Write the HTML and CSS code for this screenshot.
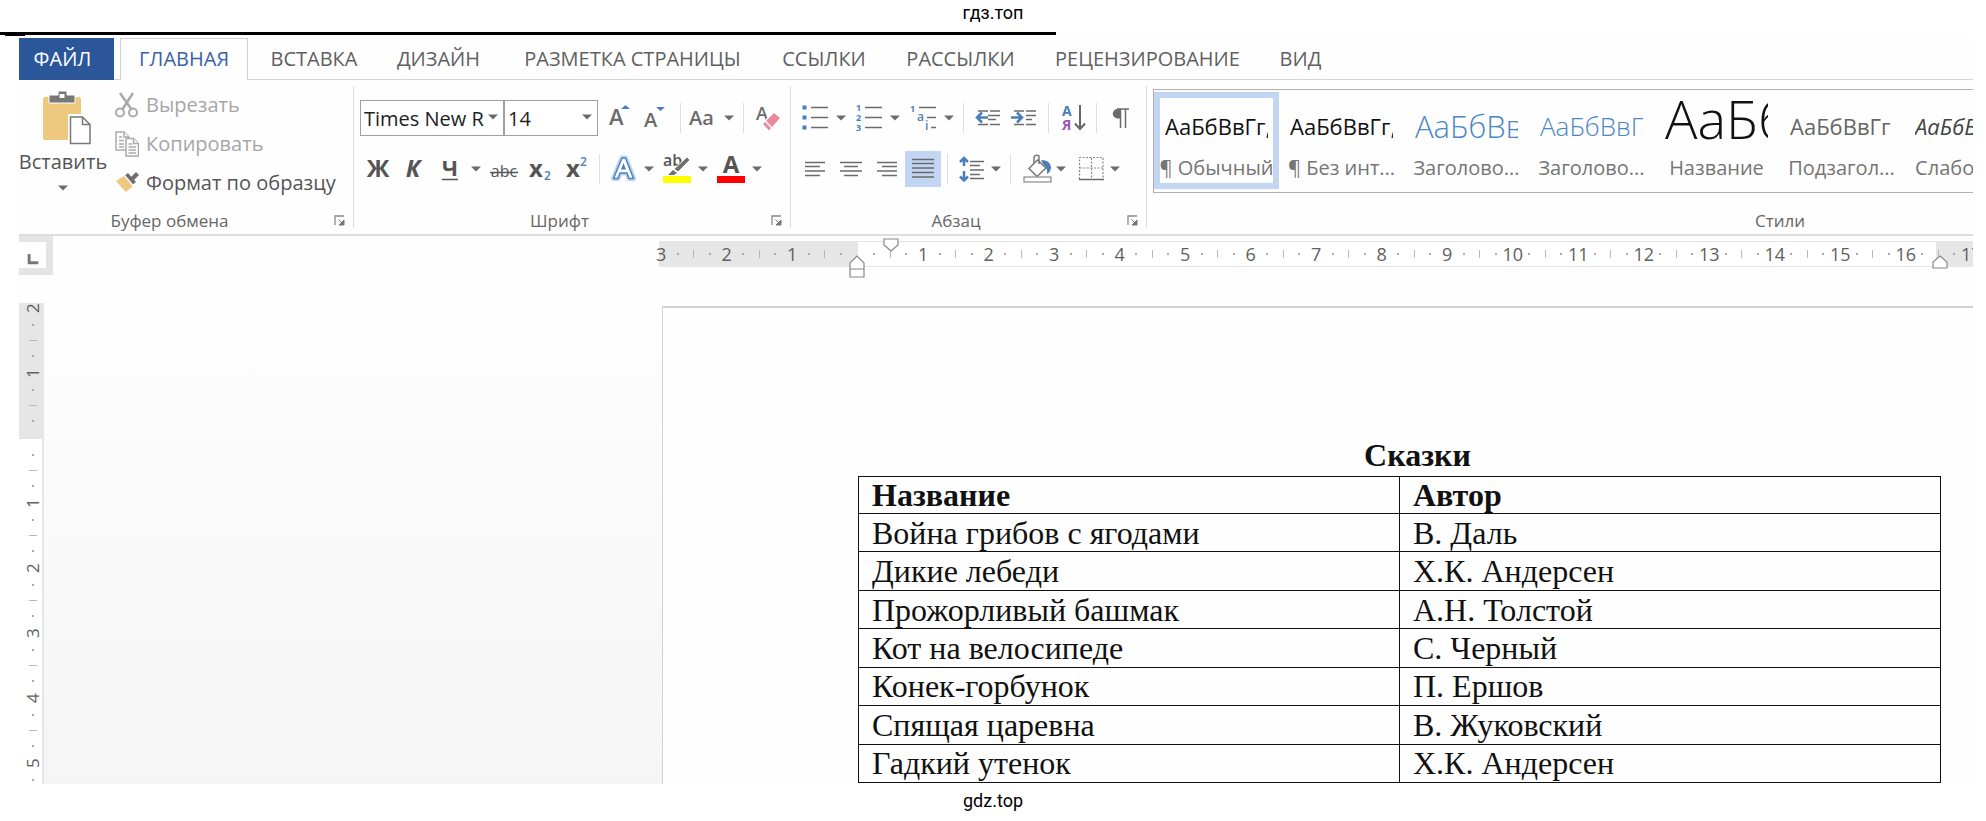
FILE: index.html
```html
<!DOCTYPE html>
<html lang="ru">
<head>
<meta charset="utf-8">
<title>гдз.топ</title>
<link rel="stylesheet" href="styles.css">
</head>
<body>
<svg class="defs" aria-hidden="true">
  <symbol id="caret" viewBox="0 0 10 6"><path d="M0 0.500H10L5 5.500z" fill="#6b6b6b"/></symbol>
  <symbol id="launch" viewBox="0 0 12 12"><path d="M1 10V1H10" fill="none" stroke="#888" stroke-width="1.300"/><path d="M4.500 4.500L9 9M10 5V10H5z" fill="#777" stroke="#777" stroke-width="1"/></symbol>
</svg>

<header class="site-name">гдз.топ</header>
<div class="top-rule"></div>

<main class="app">
  <nav class="tabs">
    <a class="tab tab-file" href="#file">ФАЙЛ</a>
    <a class="tab tab-active" href="#home">ГЛАВНАЯ</a>
    <a class="tab" href="#insert">ВСТАВКА</a>
    <a class="tab" href="#design">ДИЗАЙН</a>
    <a class="tab" href="#layout">РАЗМЕТКА СТРАНИЦЫ</a>
    <a class="tab" href="#refs">ССЫЛКИ</a>
    <a class="tab" href="#mail">РАССЫЛКИ</a>
    <a class="tab" href="#review">РЕЦЕНЗИРОВАНИЕ</a>
    <a class="tab" href="#view">ВИД</a>
  </nav>

  <div class="ribbon">
    <section class="group group-clipboard">
      <div class="clipboard">
        <button class="paste" type="button">
          <svg width="56" height="54" viewBox="-8 0 56 54"><rect x="0" y="6" width="38" height="43" rx="2" fill="#edc87e"/><path d="M6 4h9V0h9v4h8v8H6z" fill="#777" stroke="#fff" stroke-width="1"/><rect x="16.500" y="3" width="5" height="4" fill="#fff"/><path d="M25 23H40L48 31V54H25z" fill="#fff"/><path d="M27.500 26H39.500L47 33.500V52.500H27.500z" fill="#fff" stroke="#777" stroke-width="1.500"/><path d="M39.500 26V33.500H47" fill="none" stroke="#777" stroke-width="1.500"/></svg>
          <span>Вставить</span>
          <svg class="caret"><use href="#caret"/></svg>
        </button>
        <div class="clip-list">
          <button class="clip-item is-disabled" type="button">
            <svg width="24" height="26" viewBox="0 0 24 26"><path d="M5 1L17 18M18 1L7 18" stroke="#aaa" stroke-width="2.500" fill="none"/><circle cx="5" cy="20.500" r="4" fill="none" stroke="#aaa" stroke-width="2"/><circle cx="18" cy="20.500" r="4" fill="none" stroke="#aaa" stroke-width="2"/></svg>
            <span>Вырезать</span>
          </button>
          <button class="clip-item is-disabled" type="button">
            <svg width="24" height="26" viewBox="0 0 24 26" fill="#fff" stroke="#aaa" stroke-width="1.500"><path d="M1 1H9L14 6V19H1z"/><path d="M9 1V6H14M4 6H7M4 9.500H9M4 13H9M4 16H9"/><path d="M11 7.500H18.500L23.500 12.500V25H11z"/><path d="M18.500 7.500V12.500H23.500M13.500 13H17M13.500 16H21M13.500 19H21M13.500 22H21"/></svg>
            <span>Копировать</span>
          </button>
          <button class="clip-item" type="button">
            <svg width="24" height="26" viewBox="0 0 24 26"><path d="M1 11L9 6L18 16L11 22Q7 18 1 11z" fill="#edc87e"/><path d="M9 6L13 3L21 12L17 15z" fill="#6f6f6f"/><path d="M15 8L21 2L24 5L18 11z" fill="#6f6f6f"/><path d="M9.500 5.500L18 15.500" stroke="#fff" stroke-width="1.500"/></svg>
            <span>Формат по образцу</span>
          </button>
        </div>
      </div>
      <footer class="group-foot"><span>Буфер обмена</span><button class="launcher" type="button" aria-label="Параметры буфера обмена"><svg><use href="#launch"/></svg></button></footer>
    </section>

    <section class="group group-font">
      <div class="rows">
        <div class="row">
          <div class="combo combo-font">
            <select aria-label="Шрифт"><option>Times New R</option></select>
            <svg class="caret"><use href="#caret"/></svg>
          </div>
          <div class="combo combo-size">
            <select aria-label="Размер шрифта"><option>14</option></select>
            <svg class="caret"><use href="#caret"/></svg>
          </div>
          <span class="space"></span>
          <button class="tool" type="button" aria-label="Увеличить размер"><svg viewBox="0 0 36 36"><text class="g semi s22" x="7" y="25">A</text><path d="M19 9L23.500 5L28 9z" fill="#4a7ebb"/></svg></button>
          <button class="tool" type="button" aria-label="Уменьшить размер"><svg viewBox="0 0 36 36"><text class="g semi s20" x="6" y="27">A</text><path d="M18 7H27L22.500 11z" fill="#4a7ebb"/></svg></button>
          <span class="sep"></span>
          <button class="tool" type="button" aria-label="Регистр"><svg viewBox="0 0 36 36"><text class="g semi s20" x="2" y="25">Aa</text></svg></button>
          <button class="drop drop-near" type="button" aria-label="Регистр, меню"><svg class="caret"><use href="#caret"/></svg></button>
          <span class="sep"></span>
          <button class="tool" type="button" aria-label="Очистить формат"><svg viewBox="0 0 36 36"><text class="g semi s18" x="6" y="20">A</text><path d="M12.500 23L22 12.500L30 19L20.500 29.500z" fill="#fff"/><path d="M16 21L24 13L30 18L22 27z" fill="#e8899d"/><path d="M13 24L15 22L21 28L19 30.500z" fill="#e8899d"/></svg></button>
        </div>
        <div class="row">
          <button class="tool" type="button" aria-label="Полужирный"><svg viewBox="0 0 36 36"><text class="d bold s24 mid" x="18" y="26">Ж</text></svg></button>
          <button class="tool" type="button" aria-label="Курсив"><svg viewBox="0 0 36 36"><text class="d bold ital s24 mid" x="17" y="26">К</text></svg></button>
          <button class="tool" type="button" aria-label="Подчёркнутый"><svg viewBox="0 0 36 36"><text class="d bold s22 mid" x="18" y="25">Ч</text><path d="M10 28.500H26" stroke="#555" stroke-width="1.500"/></svg></button>
          <button class="drop" type="button" aria-label="Подчёркивание, меню"><svg class="caret"><use href="#caret"/></svg></button>
          <span class="gap"></span>
          <button class="tool" type="button" aria-label="Зачёркнутый"><svg viewBox="0 0 36 36"><text class="d s16 mid" x="18" y="26">abc</text><path d="M4 21.500H32" stroke="#555" stroke-width="1.500"/></svg></button>
          <button class="tool" type="button" aria-label="Подстрочный"><svg viewBox="0 0 36 36"><text class="d bold s24" x="7" y="26">x</text><text class="b semi s12" x="22" y="29">2</text></svg></button>
          <button class="tool" type="button" aria-label="Надстрочный"><svg viewBox="0 0 36 36"><text class="d bold s24" x="8" y="26">x</text><text class="b semi s12" x="22" y="15">2</text></svg></button>
          <span class="sep sep-tight"></span>
          <button class="tool" type="button" aria-label="Текстовые эффекты"><svg viewBox="0 0 36 36"><path d="M8.500 27.500L17 7H20.500L28.500 27.500H24L22 22H15L13 27.500z" fill="#fff" stroke="#bcd3f0" stroke-width="5" stroke-linejoin="round"/><path d="M8.500 27.500L17 7H20.500L28.500 27.500H24L22 22H15L13 27.500z" fill="#fff" stroke="#4a80c4" stroke-width="1.500" stroke-linejoin="round"/><path d="M16 18.500L18.500 12L21 18.500z" fill="#4a80c4"/></svg></button>
          <button class="drop" type="button" aria-label="Текстовые эффекты, меню"><svg class="caret"><use href="#caret"/></svg></button>
          <span class="gap"></span>
          <button class="tool" type="button" aria-label="Цвет выделения"><svg viewBox="0 0 36 36"><text class="d semi s16" x="4" y="15">ab</text><path d="M28 6L31 9L19 21L15 18z" fill="#707070" stroke="#fff" stroke-width="1"/><path d="M14 19L18 22L15 24H9z" fill="#707070"/><rect x="4" y="25" width="28" height="7" fill="#ff0"/></svg></button>
          <button class="drop" type="button" aria-label="Цвет выделения, меню"><svg class="caret"><use href="#caret"/></svg></button>
          <span class="gap"></span>
          <button class="tool" type="button" aria-label="Цвет текста"><svg viewBox="0 0 36 36"><text class="d bold s24 mid" x="18" y="22">A</text><rect x="4" y="25" width="28" height="7" fill="#f00"/></svg></button>
          <button class="drop" type="button" aria-label="Цвет текста, меню"><svg class="caret"><use href="#caret"/></svg></button>
        </div>
      </div>
      <footer class="group-foot"><span>Шрифт</span><button class="launcher" type="button" aria-label="Параметры шрифта"><svg><use href="#launch"/></svg></button></footer>
    </section>

    <section class="group group-para">
      <div class="rows">
        <div class="row">
          <button class="tool" type="button" aria-label="Маркеры"><svg viewBox="0 0 36 36"><path d="M14 7.500H31M14 17.500H31M14 27.500H31" class="ln"/><path d="M5.500 5.500h4v4h-4zM5.500 15.500h4v4h-4zM5.500 25.500h4v4h-4z" fill="#4a7ebb"/></svg></button>
          <button class="drop" type="button" aria-label="Маркеры, меню"><svg class="caret"><use href="#caret"/></svg></button>
          <span class="gap"></span>
          <button class="tool" type="button" aria-label="Нумерация"><svg viewBox="0 0 36 36"><path d="M14 7.500H31M14 17.500H31M14 27.500H31" class="ln"/><text class="b bold s9" x="5" y="11">1</text><text class="b bold s9" x="5" y="21">2</text><text class="b bold s9" x="5" y="31">3</text></svg></button>
          <button class="drop" type="button" aria-label="Нумерация, меню"><svg class="caret"><use href="#caret"/></svg></button>
          <span class="gap"></span>
          <button class="tool" type="button" aria-label="Многоуровневый список"><svg viewBox="0 0 36 36"><path d="M14 7.500H31M22 17.500H31M26 27.500H31" class="ln"/><text class="b bold s9" x="5" y="12">1</text><text class="b semi s12" x="12" y="21">a</text><text class="b semi s12" x="20" y="30">i</text></svg></button>
          <button class="drop" type="button" aria-label="Многоуровневый список, меню"><svg class="caret"><use href="#caret"/></svg></button>
          <span class="sep"></span>
          <button class="tool" type="button" aria-label="Уменьшить отступ"><svg viewBox="0 0 36 36"><path d="M8 11H18M20 11H30M18 15.500H30M18 19.500H26M8 24.500H18M20 24.500H30" class="ln"/><path d="M18 17.500H8M12 12.500L7 17.500L12 22.500" fill="none" stroke="#4a7ebb" stroke-width="2.500"/></svg></button>
          <button class="tool" type="button" aria-label="Увеличить отступ"><svg viewBox="0 0 36 36"><path d="M8 11H18M20 11H30M20 15.500H30M20 19.500H26M8 24.500H18M20 24.500H30" class="ln"/><path d="M5 17.500H15M11 12.500L16 17.500L11 22.500" fill="none" stroke="#4a7ebb" stroke-width="2.500"/></svg></button>
          <span class="sep"></span>
          <button class="tool" type="button" aria-label="Сортировка"><svg viewBox="0 0 36 36"><text class="b bold s14" x="7" y="16">А</text><text class="p bold s14" x="7" y="30">Я</text><path d="M25 5V28M20 23.500L25 29L30 23.500" fill="none" stroke="#666" stroke-width="2"/></svg></button>
          <span class="sep sep-tight"></span>
          <button class="tool" type="button" aria-label="Непечатаемые знаки"><svg viewBox="0 0 36 36"><path d="M18 9H15.500A4.500 4.500 0 0 0 15.500 18.500H18z" fill="#6b6b6b"/><path d="M15 9H27M18.500 9V28M23.500 9V28" fill="none" stroke="#6b6b6b" stroke-width="1.500"/></svg></button>
        </div>
        <div class="row">
          <button class="tool" type="button" aria-label="По левому краю"><svg viewBox="0 0 36 36"><path d="M8 11.500H28M8 15.500H23M8 20H28M8 24.500H23" class="ln"/></svg></button>
          <button class="tool" type="button" aria-label="По центру"><svg viewBox="0 0 36 36"><path d="M7 11.500H29M11 15.500H25M7 20H29M11 24.500H25" class="ln"/></svg></button>
          <button class="tool" type="button" aria-label="По правому краю"><svg viewBox="0 0 36 36"><path d="M8 11.500H28M13 15.500H28M8 20H28M13 24.500H28" class="ln"/></svg></button>
          <button class="tool is-on" type="button" aria-label="По ширине" aria-pressed="true"><svg viewBox="0 0 36 36"><path d="M7 8.500H29M7 12.500H29M7 17H29M7 21.500H29M7 26H29" class="ln"/></svg></button>
          <span class="sep"></span>
          <button class="tool" type="button" aria-label="Интервал"><svg viewBox="0 0 36 36"><path d="M16 10.500H30M16 14.500H26M16 19H30M16 23.500H26M16 27.500H30" class="ln"/><path d="M10 7V15M6 11L10 7L14 11M10 20V29M6 25.500L10 29.500L14 25.500" fill="none" stroke="#4a7ebb" stroke-width="2.500"/></svg></button>
          <button class="drop drop-near" type="button" aria-label="Интервал, меню"><svg class="caret"><use href="#caret"/></svg></button>
          <span class="sep"></span>
          <button class="tool" type="button" aria-label="Заливка"><svg viewBox="0 0 36 36"><path d="M24 9Q33 9 34 16Q34 21 30 23Q31 17 26 13z" fill="#4a7ebb"/><path d="M12 17.500L20.500 9L29 17L20 25.500z" fill="#fff" stroke="#777" stroke-width="1.500"/><path d="M17 12V6Q19 3 22 5V13" fill="none" stroke="#777" stroke-width="1.500"/><rect x="7" y="26" width="27" height="5" fill="#fff" stroke="#888" stroke-width="1.200"/></svg></button>
          <button class="drop" type="button" aria-label="Заливка, меню"><svg class="caret"><use href="#caret"/></svg></button>
          <span class="gap"></span>
          <button class="tool" type="button" aria-label="Границы"><svg viewBox="0 0 36 36"><path d="M8.500 28V6.500H32V28M20.500 7V28M9 17H32" fill="none" stroke="#888" stroke-width="1.200" stroke-dasharray="2 1.500"/><path d="M8 28.500H33" class="ln"/></svg></button>
          <button class="drop" type="button" aria-label="Границы, меню"><svg class="caret"><use href="#caret"/></svg></button>
        </div>
      </div>
      <footer class="group-foot"><span>Абзац</span><button class="launcher" type="button" aria-label="Параметры абзаца"><svg><use href="#launch"/></svg></button></footer>
    </section>

    <section class="group group-styles">
      <div class="gallery">
        <button class="style is-current" type="button"><span class="sample">АаБбВвГг,</span><span class="name">¶ Обычный</span></button>
        <button class="style" type="button"><span class="sample">АаБбВвГг,</span><span class="name">¶ Без инт...</span></button>
        <button class="style" type="button"><span class="sample sample-h1">АаБбВв</span><span class="name">Заголово...</span></button>
        <button class="style" type="button"><span class="sample sample-h2">АаБбВвГ</span><span class="name">Заголово...</span></button>
        <button class="style" type="button"><span class="sample sample-title">АаБб</span><span class="name">Название</span></button>
        <button class="style" type="button"><span class="sample sample-sub">АаБбВвГг</span><span class="name">Подзагол...</span></button>
        <button class="style" type="button"><span class="sample sample-em">АаБбВвГг</span><span class="name">Слабое в...</span></button>
      </div>
      <footer class="group-foot"><span>Стили</span></footer>
    </section>
  </div>

  <div class="ruler-row">
    <button class="tab-stop" type="button" aria-label="Позиция табуляции"><svg viewBox="0 0 28 26"><path d="M10.500 12V21H20" fill="none" stroke="#777" stroke-width="3"/></svg></button>
    <div class="ruler">
      <div class="band"></div>
      <div class="scale">
        <span class="cm">3</span><span class="cm">2</span><span class="cm">1</span><span class="cm"></span>
        <span class="cm">1</span><span class="cm">2</span><span class="cm">3</span><span class="cm">4</span>
        <span class="cm">5</span><span class="cm">6</span><span class="cm">7</span><span class="cm">8</span>
        <span class="cm">9</span><span class="cm">10</span><span class="cm">11</span><span class="cm">12</span>
        <span class="cm">13</span><span class="cm">14</span><span class="cm">15</span><span class="cm">16</span><span class="cm">17</span>
      </div>
      <svg class="marker marker-left" viewBox="0 0 16 23"><path d="M1 22V8L8 1L15 8V22zM1 14H15" fill="#fff" stroke="#888" stroke-width="1.200"/></svg>
      <svg class="marker marker-first" viewBox="0 0 16 14"><path d="M1 1H15V7L8 13L1 7z" fill="#fff" stroke="#888" stroke-width="1.200"/></svg>
      <svg class="marker marker-right" viewBox="0 0 16 14"><path d="M1 13V7L8 1L15 7V13z" fill="#fff" stroke="#888" stroke-width="1.200"/></svg>
    </div>
  </div>

  <div class="workspace">
    <div class="vruler">
      <div class="vscale">
        <span class="vcm"><b>2</b></span><span class="vcm"><b>1</b></span><span class="vcm"></span><span class="vcm"><b>1</b></span>
        <span class="vcm"><b>2</b></span><span class="vcm"><b>3</b></span><span class="vcm"><b>4</b></span><span class="vcm"><b>5</b></span>
      </div>
    </div>
    <div class="gutter"></div>
    <article class="page">
      <h1>Сказки</h1>
      <table>
        <thead><tr><th scope="col">Название</th><th scope="col">Автор</th></tr></thead>
        <tbody>
          <tr><td>Война грибов с ягодами</td><td>В. Даль</td></tr>
          <tr><td>Дикие лебеди</td><td>Х.К. Андерсен</td></tr>
          <tr><td>Прожорливый башмак</td><td>А.Н. Толстой</td></tr>
          <tr><td>Кот на велосипеде</td><td>С. Черный</td></tr>
          <tr><td>Конек-горбунок</td><td>П. Ершов</td></tr>
          <tr><td>Спящая царевна</td><td>В. Жуковский</td></tr>
          <tr><td>Гадкий утенок</td><td>Х.К. Андерсен</td></tr>
        </tbody>
      </table>
    </article>
  </div>
</main>

<footer class="site-name">gdz.top</footer>
</body>
</html>
```
FILE: styles.css
```css
* { box-sizing: border-box; }

body {
  margin: 0;
  background: #fff;
  color: #555;
  font-family: "Open Sans", "Noto Sans", sans-serif;
  font-size: 20px;
  overflow-x: hidden;
}

button, select {
  margin: 0;
  padding: 0;
  border: 0;
  background: none;
  color: inherit;
  font: inherit;
}

svg { display: block; }
.defs { position: absolute; width: 0; height: 0; }

.site-name {
  padding: 3px 0;
  color: #000;
  font-family: Roboto, sans-serif;
  font-size: 18px;
  line-height: 20px;
  text-align: center;
}
header.site-name { padding-bottom: 9px; }
footer.site-name { padding-top: 7px; }

.top-rule {
  width: 1056px;
  max-width: 100%;
  height: 6px;
  border-top: 3px solid #000;
}
.top-rule::after {
  content: "";
  display: block;
  width: 20px;
  height: 1px;
  margin-left: 5px;
  background: #000;
}

.app {
  margin: 0 13px 0 19px;
  overflow: hidden;
  background: #fefefe;
}

/* Tabs */
.tabs {
  display: grid;
  grid-template-columns: 95px 140px 120px 129px 259px 124px 149px 225px 81px;
  height: 42px;
  border-bottom: 1px solid #d5d5d5;
  line-height: 42px;
}
.tab {
  color: #606060;
  text-align: center;
  text-decoration: none;
  white-space: nowrap;
}
.tab-file {
  padding-right: 8px;
  background: #2b579a;
  color: #fff;
}
.tab-active {
  height: 42px;
  margin: 0 6px;
  border: 1px solid #d0d0d0;
  border-bottom: 0;
  background: #fefefe;
  color: #3a62a8;
  line-height: 40px;
}

/* Ribbon */
.ribbon {
  display: grid;
  grid-template-columns: 335px 437px 356px 1fr;
  height: 156px;
  border-bottom: 2px solid #dedede;
}
.group {
  position: relative;
  display: flex;
  flex-direction: column;
  justify-content: space-between;
  min-width: 0;
}
.group:not(.group-styles)::after {
  content: "";
  position: absolute;
  top: 6px;
  right: 0;
  bottom: 6px;
  width: 1px;
  background: #dcdcdc;
}
.group-foot {
  display: grid;
  grid-template-columns: 1fr 26px;
  align-items: center;
  color: #666;
  font-size: 17px;
  line-height: 26px;
  text-align: center;
}
.group-clipboard .group-foot span { padding-right: 8px; }
.launcher svg { width: 12px; height: 12px; margin-left: 6px; }
.caret { width: 10px; height: 6px; }

.clipboard { display: flex; gap: 8px; }
.paste {
  display: flex;
  flex-direction: column;
  align-items: center;
  width: 88px;
  padding-top: 11px;
}
.paste span { line-height: 34px; }
.paste .caret { margin-top: 6px; }
.clip-list { padding-top: 5px; }
.clip-item {
  display: flex;
  align-items: center;
  gap: 7px;
  height: 39px;
  white-space: nowrap;
}
.is-disabled { color: #a6a6a6; }

.rows {
  display: grid;
  gap: 15px;
  padding: 20px 0 0 6px;
}
.row { display: flex; height: 36px; }
.tool { flex: none; width: 36px; height: 36px; }
.tool svg { width: 36px; height: 36px; }
.drop {
  display: flex;
  flex: none;
  align-items: center;
  justify-content: center;
  width: 16px;
}
.drop-near { width: 12px; margin-right: 2px; }
.gap { width: 2px; }
.space { width: 4px; }
.sep {
  width: 1px;
  margin: 3px 6px;
  background: #dedede;
}
.sep-tight { margin: 3px 5px; }
.is-on { background: #c2d5f2; }

.combo { position: relative; }
.combo select {
  width: 100%;
  height: 36px;
  padding: 0 3px;
  border: 1px solid #a0a0a0;
  border-radius: 0;
  appearance: none;
  background: #fff;
  color: #222;
}
.combo .caret {
  position: absolute;
  top: 14px;
  right: 6px;
  pointer-events: none;
}
.combo-font { width: 144px; }
.combo-size { width: 94px; }

/* Letters inside tool icons */
.g { fill: #6b6b6b; }
.d { fill: #555; }
.b { fill: #4a7ebb; }
.p { fill: #9a55b8; }
.semi { font-weight: 600; }
.bold { font-weight: 700; }
.ital { font-style: italic; }
.mid { text-anchor: middle; }
.s9 { font-size: 9px; }
.s12 { font-size: 12px; }
.s14 { font-size: 14px; }
.s16 { font-size: 16px; }
.s18 { font-size: 18px; }
.s20 { font-size: 20px; }
.s22 { font-size: 22px; }
.s24 { font-size: 24px; }
.ln { fill: none; stroke: #6b6b6b; stroke-width: 1.5px; }

/* Style gallery */
.group-styles > * { min-width: 1292px; }
.gallery {
  display: flex;
  height: 104px;
  margin: 9px 0 0 6px;
  padding: 2px 0;
  border: 1px solid #b0b0b0;
}
.style {
  display: flex;
  flex: none;
  flex-direction: column;
  align-items: center;
  width: 125px;
  height: 97px;
  padding-top: 9px;
  border: 0 solid #c2d5f2;
  overflow: hidden;
}
.is-current {
  padding-top: 3px;
  border-width: 6px;
}
.sample {
  width: 103px;
  height: 53px;
  overflow: hidden;
  color: #111;
  font-size: 22px;
  line-height: 50px;
  text-align: left;
  white-space: nowrap;
}
.sample-h1 { color: #4a86c5; font-size: 31px; font-weight: 300; }
.sample-h2 { color: #4a86c5; font-size: 26px; font-weight: 300; }
.sample-title { font-size: 54px; font-weight: 300; line-height: 34px; }
.sample-sub { color: #666; }
.sample-em { color: #444; font-style: italic; }
.name {
  color: #757575;
  line-height: 28px;
  white-space: nowrap;
}

/* Horizontal ruler */
.ruler-row {
  display: flex;
  height: 67px;
}
.tab-stop {
  width: 34px;
  height: 39px;
  padding: 5px 7px 7px 0;
  background: #e4e4e4;
}
.tab-stop svg { width: 27px; height: 26px; background: #fff; }
.ruler {
  position: relative;
  width: 1320px;
  flex: none;
  height: 26px;
  margin: 5px 0 0 600px;
}
.band {
  height: 26px;
  margin-left: 6px;
  border: solid #e6e6e6;
  border-width: 1px 37px 1px 199px;
  background: #fff;
}
.scale {
  position: absolute;
  inset: 0 auto 0 0;
  display: grid;
  grid-template-columns: repeat(21, 5%);
  width: 1310px;
}
.cm {
  display: flex;
  align-items: center;
  justify-content: center;
  width: 25%;
  color: #606060;
  font-size: 18px;
  line-height: 26px;
  position: relative;
}
.cm::after {
  content: "";
  position: absolute;
  top: 9px;
  left: 100%;
  width: 300%;
  height: 8px;
  background:
    linear-gradient(#b8b8b8, #b8b8b8) 50% 50% / 1px 8px no-repeat,
    linear-gradient(#aaa, #aaa) 16% 50% / 2px 2px no-repeat,
    linear-gradient(#aaa, #aaa) 84% 50% / 2px 2px no-repeat;
}
.marker { position: absolute; width: 16px; }
.marker-left { left: 196px; top: 14px; height: 23px; }
.marker-first { left: 230px; top: -3px; height: 14px; }
.marker-right { right: 25px; top: 14px; height: 14px; }

/* Document area */
.workspace {
  display: grid;
  grid-template-columns: 25px 618px 1fr;
  height: 481px;
  overflow: hidden;
}
.vruler {
  overflow: hidden;
  border-right: 2px solid #e6e6e6;
  background: linear-gradient(#e6e6e6 136px, #fff 136px);
}
.vscale { margin-top: -3px; }
.vcm {
  position: relative;
  display: block;
  height: 65px;
  padding-left: 3px;
}
.vcm b {
  display: block;
  width: 22px;
  height: 16px;
  color: #606060;
  font-size: 17px;
  font-weight: 400;
  line-height: 22px;
  text-align: center;
  writing-mode: vertical-rl;
  transform: rotate(180deg);
}
.vcm::after {
  content: "";
  position: absolute;
  top: 16px;
  left: 10px;
  width: 8px;
  height: 49px;
  background:
    linear-gradient(#b8b8b8, #b8b8b8) 50% 50% / 8px 1px no-repeat,
    linear-gradient(#aaa, #aaa) 50% 16% / 2px 2px no-repeat,
    linear-gradient(#aaa, #aaa) 50% 84% / 2px 2px no-repeat;
}
.gutter { background: linear-gradient(#fefefe, #f5f5f5); }
.page {
  margin-top: 3px;
  padding: 129px 32px 0 195px;
  border: solid #d2d2d2;
  border-width: 2px 0 0 1px;
  background: #fefefe;
  color: #111;
  font-family: "Liberation Serif", serif;
  font-size: 32px;
  line-height: 36px;
}
.page h1 {
  margin: 0;
  padding-bottom: 3px;
  font-size: 32px;
  line-height: 36px;
  text-align: center;
  text-indent: 36px;
}
table {
  width: 100%;
  height: 307px;
  border-collapse: collapse;
  table-layout: fixed;
}
th, td {
  padding: 0 13px;
  border: 1px solid #111;
  text-align: left;
}
```
